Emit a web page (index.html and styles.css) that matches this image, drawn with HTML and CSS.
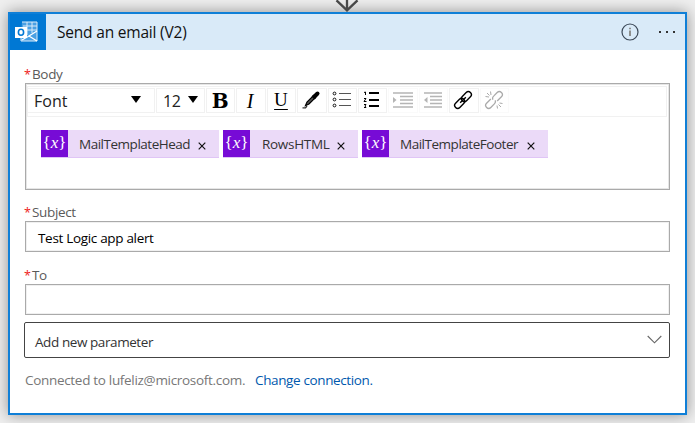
FILE: index.html
```html
<!DOCTYPE html>
<html lang="en">
<head>
<meta charset="utf-8">
<title>Send an email (V2)</title>
<link rel="stylesheet" href="styles.css">
</head>
<body>
<svg class="arrow" viewBox="0 0 24 12"><path d="M12 0V10M1.500 0.300L12 10.400L22.500 0.300" fill="none" stroke="#484848" stroke-width="2.300"/></svg>
<main class="card">
  <header class="header">
    <div class="logo">
      <svg width="24" height="24" viewBox="0 0 24 24"><path d="M7 2H22V21H6V18" fill="#4aa0e3" stroke="#d9ebf9"/><path d="M8 6H22M8 10H22M12 2V15M17 2V13" stroke="#d9ebf9"/><path d="M22 11L14 16L22 21M14 16L7 20" fill="none" stroke="#fff" stroke-width="1.300"/><path d="M0 7H12V18H0Z" fill="#fff"/><ellipse cx="6" cy="12.300" rx="2.600" ry="3" fill="none" stroke="#0078d4" stroke-width="1.600"/></svg>
    </div>
    <h1 class="title">Send an email (V2)</h1>
    <svg class="info" width="18" height="18" viewBox="0 0 18 18"><circle cx="9" cy="9" r="8" fill="none" stroke="#3b4857" stroke-width="1.200"/><path d="M9 7.500V13M9 4.800V6.200" stroke="#665f55" stroke-width="1.300"/></svg>
    <svg class="more" width="18" height="4" viewBox="0 0 18 4"><path d="M1 1h2v2H1zM8 1h2v2H8zM15 1h2v2h-2z" fill="#333"/></svg>
  </header>
  <div class="content">
    <label class="label"><span class="star">*</span><span class="t-body">Body</span></label>
    <div class="editor">
      <div class="toolbar">
        <div class="btn font"><span class="t-font">Font</span><i class="caret"></i></div>
        <div class="btn size"><span class="t-size">12</span><i class="caret"></i></div>
        <div class="btn bold">B</div>
        <div class="btn italic">I</div>
        <div class="btn underline">U</div>
        <div class="btn"><svg width="20" height="20" viewBox="0 0 20 20"><path d="M1.500 17.800H4.500L6 16" fill="none" stroke="#333" stroke-width="1.300"/><path d="M4.500 15.500L6 12L12 6L14 8L8 14Z" fill="#555" stroke="#000" stroke-width="1.200"/><path d="M11.500 5.500L14.500 8.500" stroke="#000" stroke-width="2.600"/><path d="M13.500 6.500L16.500 3.500" stroke="#000" stroke-width="4" stroke-linecap="round"/></svg></div>
        <div class="btn"><svg width="20" height="20" viewBox="0 0 20 20"><g fill="none" stroke="#111"><circle cx="2.500" cy="3.500" r="1.400"/><circle cx="2.500" cy="9.500" r="1.400"/><circle cx="2.500" cy="15.500" r="1.400"/><path d="M7 3.500H19M7 9.500H19M7 15.500H19" stroke="#555"/></g></svg></div>
        <div class="btn"><svg width="20" height="20" viewBox="0 0 20 20"><path d="M7 3H17M7 10H17M7 16H17" stroke="#000" stroke-width="2"/><path d="M2 2.500L3.500 2V5M2 8.500H4L2 11.500H4.500M2 14.500H4L3 16L4 17.500H2" fill="none" stroke="#000"/></svg></div>
        <div class="btn off"><svg width="20" height="20" viewBox="0 0 20 20"><path d="M0 3H20M7 6.500H20M7 10H20M7 13.500H20M0 17H20" stroke="#b5b5b5" stroke-width="1.500"/><path d="M0 7L3.500 10L0 13Z" fill="#b5b5b5"/></svg></div>
        <div class="btn off"><svg width="20" height="20" viewBox="0 0 20 20"><path d="M1 3H19M7 6.500H19M7 10H19M7 13.500H19M1 17H19" stroke="#b5b5b5" stroke-width="1.500"/><path d="M4.500 7L1 10L4.500 13Z" fill="#b5b5b5"/></svg></div>
        <div class="btn"><svg width="20" height="20" viewBox="0 0 20 20"><g transform="rotate(-45 10 10)" fill="none" stroke="#000" stroke-width="1.400"><rect x="-.5" y="7" width="11.500" height="6" rx="3"/><rect x="9" y="7" width="11.500" height="6" rx="3"/><path d="M6 10H14"/></g></svg></div>
        <div class="btn off"><svg width="20" height="20" viewBox="0 0 20 20"><g transform="rotate(-45 10 10)" fill="none" stroke="#aaa" stroke-width="1.300"><path d="M8.500 7H2.500A3 3 0 0 0 2.500 13H7.500A3 3 0 0 0 10.500 11M11.500 13H17.500A3 3 0 0 0 17.500 7H12.500A3 3 0 0 0 9.500 9"/></g><path d="M3 3L5.500 5.500M6.500 1.500L7 5M1.500 6.500L5 7M14.500 14.500L17 17M13 15.500L13.500 18.500M15.500 13L18.500 13.500" stroke="#aaa"/></svg></div>
      </div>
      <div class="tokens">
        <div class="token t1"><b class="fx">{<i>x</i>}</b><span class="name">MailTemplateHead</span><svg class="close" viewBox="0 0 8 8"><path d="M.7.700L7.300 7.300M7.300.700L.7 7.300"/></svg></div>
        <div class="token t2"><b class="fx">{<i>x</i>}</b><span class="name">RowsHTML</span><svg class="close" viewBox="0 0 8 8"><path d="M.7.700L7.300 7.300M7.300.700L.7 7.300"/></svg></div>
        <div class="token t3"><b class="fx">{<i>x</i>}</b><span class="name">MailTemplateFooter</span><svg class="close" viewBox="0 0 8 8"><path d="M.7.700L7.300 7.300M7.300.700L.7 7.300"/></svg></div>
      </div>
    </div>
    <label class="label second"><span class="star">*</span><span class="t-subject">Subject</span></label>
    <div class="field"><span class="t-value">Test Logic app alert</span></div>
    <label class="label third"><span class="star">*</span><span class="t-to">To</span></label>
    <div class="field"></div>
    <div class="select"><span class="t-add">Add new parameter</span><svg width="15" height="9" viewBox="0 0 15 9"><path d="M.7 1L7.500 7.800L14.300 1" fill="none" stroke="#666" stroke-width="1.100"/></svg></div>
    <div class="connection"><span class="t-conn">Connected to lufeliz@microsoft.com.</span><a class="t-change">Change connection.</a></div>
  </div>
</main>
</body>
</html>
```

FILE: styles.css
```css
* { box-sizing: border-box; }
body {
  margin: 0;
  width: 695px;
  height: 423px;
  padding: 12px 8px 8px;
  overflow: hidden;
  background: #efefef;
  font-family: "Open Sans", "Noto Sans", sans-serif;
  font-size: 13.5px;
  color: #333;
}
.arrow { position: absolute; left: 335px; top: 0; width: 24px; height: 12px; z-index: 1; }
.card {
  width: 679px;
  height: 403px;
  border: 2px solid #0f7fd7;
  background: #fff;
  box-shadow: 0 0 14px rgba(0, 0, 0, .4);
}
.header { display: flex; align-items: center; height: 36px; background: #d9eaf8; }
.logo { width: 36px; height: 36px; background: #0078d4; display: flex; align-items: center; justify-content: center; padding-right: 2px; }
.title { margin: 0 0 0 11px; flex: 1; font-size: 15.5px; font-weight: 400; line-height: 37px; color: #111; letter-spacing: -.2px; white-space: nowrap; }
.info { margin-right: 19px; }
.more { margin-right: 9px; }
.content { padding: 14px 15px 0; }
.label { display: flex; height: 19px; line-height: 21px; color: #5a5a5a; white-space: nowrap; letter-spacing: -.35px; }
.star { width: 7px; color: #e22; margin-left: -1px; margin-right: 1px; font-size: 12.5px; }
.editor { height: 107px; border: 1px solid #aaa; box-shadow: inset 0 0 0 1px #e6e6e6; }
.toolbar { display: flex; margin: 2px 2px 0 1px; height: 31px; border: 1px solid #f1f1f1; padding: 1px 0 0; gap: 1px; }
.btn { width: 29.4px; height: 25px; border: 1px solid #f1f1f1; display: flex; align-items: center; justify-content: center; flex: none; color: #000; }
.btn svg { flex: none; margin-left: -1px; margin-top: -2px; }
.off { border-color: #fafafa; }
.font { width: 128px; justify-content: space-between; padding: 0 13px 0 6px; font-size: 16px; color: #222; margin-left: -1px; }
.size { width: 49px; justify-content: space-between; padding: 0 6px 0 6px; font-size: 16px; color: #222; letter-spacing: -.5px; }
.caret { border: 5.5px solid transparent; border-top: 7px solid #000; border-bottom: 0; margin-top: -3px; }
.bold { font: 700 20px/22px "DejaVu Serif", serif; padding-right: 1px; }
.italic { font: italic 20px/22px "Liberation Serif", serif; padding-right: 2px; }
.underline { font: 19px/20px "Liberation Serif", serif; text-decoration: underline; text-underline-offset: 3px; text-decoration-thickness: 1px; padding: 0 1px 2px 0; }
.tokens { display: flex; gap: 4px; margin: 13px 0 0 15px; }
.token { height: 28px; background: #ebdaf8; display: flex; align-items: center; border-bottom: 1px solid #e0c5f6; }
.t1 { width: 178px; }
.t2 { width: 135px; }
.t3 { width: 186px; }
.fx { width: 27px; height: 27px; background: #770bd6; color: #fff; font: 17px/25px "Liberation Serif", serif; text-align: center; flex: none; }
.name { margin-left: 11px; flex: 1; white-space: nowrap; letter-spacing: -.48px; }
.t2 .name { margin-left: 12px; letter-spacing: -.3px; }
.close { width: 8px; height: 8px; margin: 5px 13px 0 0; fill: none; stroke: #111; stroke-width: 1.2; }
.second { margin-top: 12px; }
.third { margin-top: 13px; }
.field { height: 31px; border: 1px solid #aaa; box-shadow: inset 0 0 0 1px #f0f0f0; padding-left: 12px; line-height: 32px; color: #000; white-space: nowrap; letter-spacing: -.32px; }
.select { height: 36px; margin: 7px 0 0 -1px; border: 1px solid #444; border-radius: 2px; display: flex; align-items: center; justify-content: space-between; padding: 3px 7px 0 10px; white-space: nowrap; letter-spacing: -.42px; }
.select svg { margin-top: -5px; }
.connection { margin-top: 12px; line-height: 20px; color: #777; white-space: nowrap; display: flex; }
.t-conn { width: 230px; letter-spacing: -.31px; }
.t-change { color: #0058ad; letter-spacing: -.37px; }
```
